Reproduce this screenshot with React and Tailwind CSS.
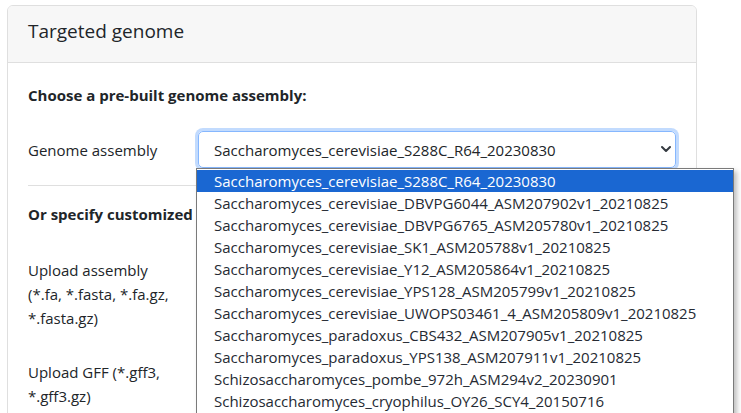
const OPTIONS = [
  'Saccharomyces_cerevisiae_S288C_R64_20230830',
  'Saccharomyces_cerevisiae_DBVPG6044_ASM207902v1_20210825',
  'Saccharomyces_cerevisiae_DBVPG6765_ASM205780v1_20210825',
  'Saccharomyces_cerevisiae_SK1_ASM205788v1_20210825',
  'Saccharomyces_cerevisiae_Y12_ASM205864v1_20210825',
  'Saccharomyces_cerevisiae_YPS128_ASM205799v1_20210825',
  'Saccharomyces_cerevisiae_UWOPS03461_4_ASM205809v1_20210825',
  'Saccharomyces_paradoxus_CBS432_ASM207905v1_20210825',
  'Saccharomyces_paradoxus_YPS138_ASM207911v1_20210825',
  'Schizosaccharomyces_pombe_972h_ASM294v2_20230901',
  'Schizosaccharomyces_cryophilus_OY26_SCY4_20150716',
];

export default function App() {
  return (
    <div className="relative w-[741px] h-[413px] overflow-hidden bg-white text-[#212529] font-['Open_Sans',sans-serif] text-[15px] leading-[24px]">
      <div className="ml-[7px] mt-[5px] w-[690px] h-[420px] border border-[#dfdfdf] rounded-[6px] overflow-hidden">
        <div className="h-[57px] bg-[#f7f7f7] border-b border-[#dfdfdf] px-[20px] pt-[11px]">
          <div className="text-[19px] leading-[28px]">Targeted genome</div>
        </div>
        <div className="px-[20px] pt-[20px]">
          <div className="font-bold">Choose a pre-built genome assembly:</div>
          <div className="mt-[24px] flex items-center h-[37px]">
            <div className="w-[170px] shrink-0">Genome assembly</div>
            <div className="relative flex-1 h-[37px] rounded-[5px] border border-[#86b7fe] shadow-[0_0_0_3px_rgba(13,110,253,0.25)] flex items-center pl-[15px] pr-[3px]">
              <span className="flex-1 whitespace-nowrap">Saccharomyces_cerevisiae_S288C_R64_20230830</span>
              <svg width="12" height="8" viewBox="0 0 12 8" className="mt-[-2px]">
                <path d="M2 2l4 4 4-4" fill="none" stroke="#343a40" strokeWidth="2" strokeLinecap="round" strokeLinejoin="round" />
              </svg>
            </div>
          </div>
          <div className="mt-[17px] border-t border-[#dfdfdf]" />
          <div className="mt-[16px] font-bold">Or specify customized genome assembly:</div>
          <div className="mt-[32px]">
            Upload assembly<br />(*.fa, *.fasta, *.fa.gz,<br />*.fasta.gz)
          </div>
          <div className="mt-[30px]">
            Upload GFF (*.gff3,<br />*.gff3.gz)
          </div>
        </div>
      </div>

      <div className="absolute left-[196px] top-[168px] w-[538px] h-[260px] bg-white border border-[#7a7a7a] shadow-[3px_3px_5px_rgba(0,0,0,0.25)] pt-[1px]">
        {OPTIONS.map((o, i) => (
          <div
            key={o}
            className={
              i === 0
                ? 'h-[22px] leading-[22px] pl-[17px] whitespace-nowrap bg-[#1a67d2] text-white'
                : 'h-[22px] leading-[22px] pl-[17px] whitespace-nowrap text-[#252a33]'
            }
          >
            {o}
          </div>
        ))}
      </div>
    </div>
  );
}
